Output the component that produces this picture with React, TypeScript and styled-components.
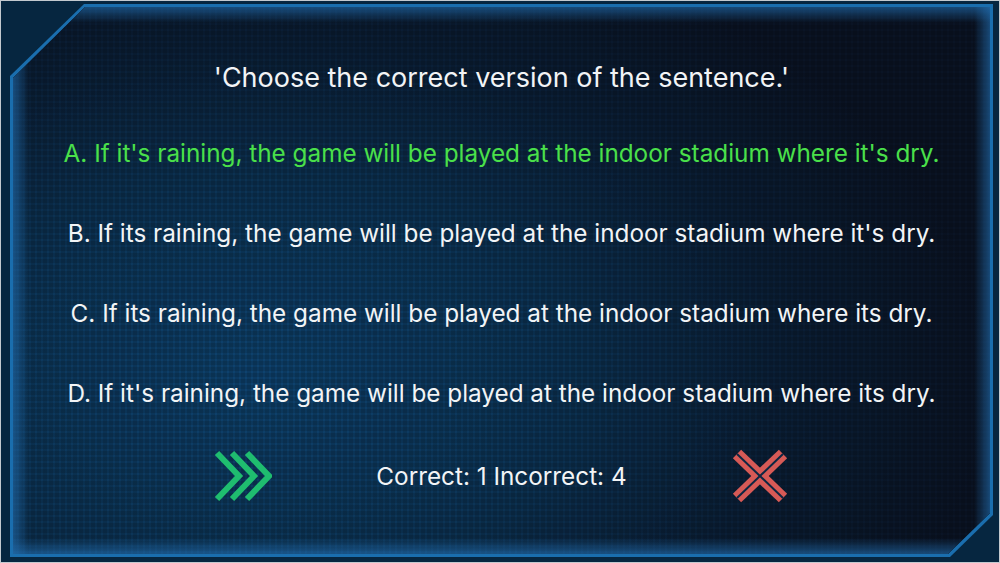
import styled, { createGlobalStyle } from 'styled-components';

const GlobalStyle = createGlobalStyle`
  html, body {
    margin: 0;
    padding: 0;
    background: #062640;
  }
  * {
    box-sizing: border-box;
  }
`;

const options = [
  { label: "A. If it's raining, the game will be played at the indoor stadium where it's dry.", correct: true },
  { label: "B. If its raining, the game will be played at the indoor stadium where it's dry.", correct: false },
  { label: 'C. If its raining, the game will be played at the indoor stadium where its dry.', correct: false },
  { label: "D. If it's raining, the game will be played at the indoor stadium where its dry.", correct: false },
];

const NextIcon = () => (
  <svg width="58" height="54" viewBox="0 0 58 54">
    {[0, 15, 30].map((o) => (
      <polyline
        key={o}
        points={`${3 + o},4 ${25 + o},27 ${3 + o},50`}
        fill="none"
        stroke="#1fbd6f"
        strokeWidth="6"
        strokeLinecap="butt"
        strokeLinejoin="miter"
      />
    ))}
  </svg>
);

const CloseIcon = () => (
  <svg width="58" height="54" viewBox="0 0 58 54">
    <line x1="6" y1="5" x2="52" y2="49" stroke="#d65a56" strokeWidth="12" />
    <line x1="52" y1="5" x2="6" y2="49" stroke="#d65a56" strokeWidth="12" />
    <line x1="6" y1="5" x2="52" y2="49" stroke="#0c2743" strokeWidth="2" />
    <line x1="52" y1="5" x2="6" y2="49" stroke="#0c2743" strokeWidth="2" />
  </svg>
);

const App = () => {
  return (
    <>
      <GlobalStyle />
      <Stage>
        <Frame>
          <Panel>
            <Title>'Choose the correct version of the sentence.'</Title>
            <Options>
              {options.map((opt) => (
                <Option key={opt.label} correct={opt.correct ? 'yes' : 'no'}>
                  {opt.label}
                </Option>
              ))}
            </Options>
            <Footer>
              <IconButton type="button">
                <NextIcon />
              </IconButton>
              <Score>Correct: 1 Incorrect: 4</Score>
              <IconButton type="button">
                <CloseIcon />
              </IconButton>
            </Footer>
          </Panel>
        </Frame>
      </Stage>
    </>
  );
};

const Stage = styled.div`
  width: 1000px;
  height: 563px;
  border: 1px solid #c3c9cf;
  background: #062640;
  padding: 3px 6px 5px 9px;
`;

const Frame = styled.div`
  height: 100%;
  background: #1a6eae;
  clip-path: polygon(74px 0, 100% 0, 100% calc(100% - 42px), calc(100% - 43px) 100%, 0 100%, 0 72px);
  padding: 3px;
`;

const Panel = styled.div`
  height: 100%;
  display: flex;
  flex-direction: column;
  align-items: center;
  padding-top: 51px;
  clip-path: polygon(72px 0, 100% 0, 100% calc(100% - 41px), calc(100% - 42px) 100%, 0 100%, 0 71px);
  background-color: #0a1a2d;
  background-image:
    linear-gradient(to bottom, rgba(34, 112, 180, 0.6), rgba(34, 112, 180, 0) 16px),
    linear-gradient(to top, rgba(34, 112, 180, 0.6), rgba(34, 112, 180, 0) 16px),
    linear-gradient(to right, rgba(34, 112, 180, 0.6), rgba(34, 112, 180, 0) 16px),
    linear-gradient(to left, rgba(34, 112, 180, 0.6), rgba(34, 112, 180, 0) 16px),
    linear-gradient(90deg, rgba(0, 0, 0, 0.13) 4px, transparent 4px),
    linear-gradient(rgba(0, 0, 0, 0.13) 4px, transparent 4px),
    radial-gradient(ellipse 75% 85% at 25% 68%, #0e4370 0%, #0c3456 40%, #0a1f37 72%, #0a1425 100%);
  background-size: auto, auto, auto, auto, 6px 6px, 6px 6px, auto;
  font-family: Inter, 'Liberation Sans', sans-serif;
`;

const Title = styled.h1`
  margin: 0;
  height: 40px;
  line-height: 40px;
  font-size: 27px;
  font-weight: 400;
  color: #f2f4f6;
  white-space: nowrap;
`;

const Options = styled.div`
  display: flex;
  flex-direction: column;
  align-items: center;
  gap: 40px;
  margin-top: 35px;
`;

const Option = styled.div<{ correct: string }>`
  height: 40px;
  line-height: 40px;
  font-size: 24.3px;
  color: ${({ correct }) => (correct === 'yes' ? '#4ae04a' : '#f2f4f6')};
  white-space: nowrap;
`;

const Footer = styled.div`
  display: flex;
  align-items: center;
  justify-content: center;
  gap: 104px;
  margin-top: 33px;
  height: 60px;
`;

const IconButton = styled.button`
  background: none;
  border: none;
  padding: 0;
  display: flex;
  cursor: pointer;
`;

const Score = styled.div`
  font-size: 24.3px;
  color: #f2f4f6;
  white-space: nowrap;
`;

export default App;
